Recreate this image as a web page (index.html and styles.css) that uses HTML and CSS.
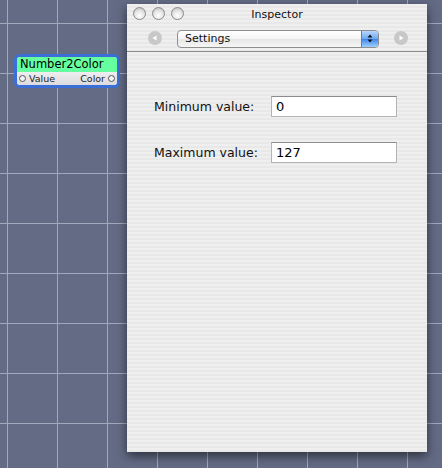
FILE: index.html
```html
<!DOCTYPE html>
<html>
<head>
<meta charset="utf-8">
<link rel="stylesheet" href="styles.css">
</head>
<body>
<div class="canvas">
  <div class="node">
    <div class="node-title">Number2Color</div>
    <div class="node-ports">
      <span class="port"><span class="dot"></span>Value</span>
      <span class="port">Color<span class="dot"></span></span>
    </div>
  </div>

  <div class="window">
    <div class="titlebar">
      <div class="lights">
        <span class="light"></span><span class="light"></span><span class="light"></span>
      </div>
      <div class="title">Inspector</div>
    </div>
    <div class="toolbar">
      <span class="nav">
        <svg width="14" height="14" viewBox="0 0 14 14"><circle cx="7" cy="7" r="7" fill="#c8c8c8"/><path d="M4.5 7 L8.5 4.5 L8.5 9.5 Z" fill="#fff"/></svg>
      </span>
      <div class="popup">
        <span class="popup-label">Settings</span>
        <span class="popup-arrows">
          <svg width="8" height="11" viewBox="0 0 8 11"><path d="M1.5 4.5 L4 1.5 L6.5 4.5 Z M1.5 6.5 L4 9.5 L6.5 6.5 Z" fill="#111"/></svg>
        </span>
      </div>
      <span class="nav">
        <svg width="14" height="14" viewBox="0 0 14 14"><circle cx="7" cy="7" r="7" fill="#c8c8c8"/><path d="M9.5 7 L5.5 4.5 L5.5 9.5 Z" fill="#fff"/></svg>
      </span>
    </div>
    <div class="content">
      <div class="row"><label class="lbl">Minimum value:</label><div class="field">0</div></div>
      <div class="row"><label class="lbl">Maximum value:</label><div class="field">127</div></div>
    </div>
  </div>
</div>
</body>
</html>
```

FILE: styles.css
```css
html, body {
  margin: 0;
  padding: 0;
}
body {
  width: 442px;
  height: 468px;
  overflow: hidden;
  font-family: "DejaVu Sans", "Liberation Sans", sans-serif;
}
.canvas {
  position: relative;
  width: 442px;
  height: 468px;
  background-color: #636b85;
  background-image:
    linear-gradient(to right, #a3a9bd 1px, transparent 1px),
    linear-gradient(to bottom, #a3a9bd 1px, transparent 1px);
  background-size: 50px 50px;
  background-position: 7px 23px;
}
.node {
  position: absolute;
  left: 14px;
  top: 54px;
  width: 100px;
  border: 3px solid #3a6fd8;
  border-radius: 6px;
  background: #e6e6ea;
  overflow: hidden;
}
.node-title {
  background: #66ff9f;
  height: 15px;
  line-height: 15px;
  padding-left: 3px;
  font-size: 11.5px;
  color: #000;
}
.node-ports {
  display: flex;
  justify-content: space-between;
  height: 13px;
  line-height: 13px;
  font-size: 9.5px;
  color: #222;
  padding: 0 2px;
  background: linear-gradient(#eeeef0, #dcdce0);
}
.port {
  display: flex;
  align-items: center;
  gap: 3px;
}
.dot {
  width: 5px;
  height: 5px;
  border: 1px solid #555;
  border-radius: 50%;
  background: #f4f4f4;
}
.window {
  position: absolute;
  left: 127px;
  top: 4px;
  width: 300px;
  height: 448px;
  background: repeating-linear-gradient(to bottom, #efefef 0 2px, #e8e8e8 2px 4px);
  box-shadow: 0 4px 10px rgba(0,0,0,0.55);
  display: flex;
  flex-direction: column;
}
.titlebar {
  position: relative;
  height: 19px;
  display: flex;
  align-items: center;
  justify-content: center;
}
.lights {
  position: absolute;
  left: 6px;
  top: 3px;
  display: flex;
  gap: 6px;
}
.light {
  width: 11px;
  height: 11px;
  border-radius: 50%;
  border: 1px solid #8a8a8a;
  background: radial-gradient(circle at 50% 70%, #ffffff 0, #e8e8e8 45%, #b8b8b8 100%);
}
.title {
  font-size: 11px;
  color: #111;
  padding-top: 1px;
}
.toolbar {
  height: 28px;
  border-bottom: 1px solid #8c8c8c;
  display: flex;
  align-items: center;
  padding: 0 19px 0 21px;
  gap: 0;
}
.nav {
  display: flex;
  width: 14px;
  height: 14px;
  margin-top: 2px;
}
.popup {
  margin-left: 15px;
  margin-right: 15px;
  flex: 1;
  height: 18px;
  border: 1px solid #8e8e8e;
  border-radius: 4px;
  background: linear-gradient(#ffffff, #f4f4f4 50%, #e6e6e6 51%, #f6f6f6);
  display: flex;
  align-items: center;
  overflow: hidden;
  box-sizing: border-box;
  margin-top: 3px;
}
.popup-label {
  flex: 1;
  font-size: 11px;
  padding-left: 7px;
  color: #111;
}
.popup-arrows {
  width: 16px;
  height: 100%;
  display: flex;
  align-items: center;
  justify-content: center;
  background: linear-gradient(#b9d7fb, #6aa6f2 50%, #3f86ec 51%, #9cd0ff);
  border-left: 1px solid #5a7fb8;
}
.content {
  padding: 44px 29px 0 27px;
  display: flex;
  flex-direction: column;
  gap: 25px;
}
.row {
  display: flex;
  align-items: center;
}
.lbl {
  width: 117px;
  font-size: 12.5px;
  color: #111;
}
.field {
  width: 126px;
  height: 21px;
  box-sizing: border-box;
  background: #fff;
  border: 1px solid #b4b4b4;
  border-top-color: #8c8c8c;
  font-size: 13px;
  line-height: 19px;
  padding-left: 4px;
  color: #000;
}
```
